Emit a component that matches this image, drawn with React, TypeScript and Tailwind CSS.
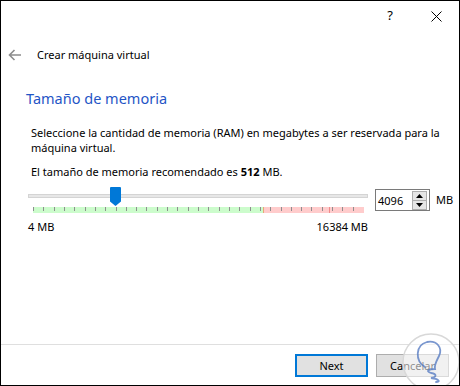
const TICKS = Array.from({ length: 32 }, (_, i) => i);

function MemorySlider() {
  return (
    <div className="w-[340px] flex flex-col">
      <div className="relative pt-[7px]">
        <div className="h-[4px] bg-[#e7e7e7] border border-[#d4d4d4]" />
        {/* thumb */}
        <svg
          className="absolute left-[82px] top-0"
          width="11"
          height="19"
          viewBox="0 0 11 19"
        >
          <path d="M1 0 H10 A1 1 0 0 1 11 1 V14.5 L5.5 19 L0 14.5 V1 A1 1 0 0 1 1 0 Z" fill="#0078d7" />
        </svg>
      </div>
      <div className="mt-[9px] ml-[5px] w-[331px] h-[6px] flex relative">
        <div className="w-[230px] h-full bg-[#ccfccc]" />
        <div className="w-px h-full bg-[#e8a878]" />
        <div className="w-[65px] h-full bg-[#ffcccc]" />
        <div className="w-px h-full bg-[#f08a8a]" />
        <div className="flex-1 h-full bg-[#ffcccc]" />
        {/* tick marks */}
        <div className="absolute left-0 top-0 w-[321px] h-[4px] flex justify-between">
          {TICKS.map((i) => (
            <div key={i} className="w-px h-full bg-[#8e8e8e]" />
          ))}
        </div>
      </div>
      <div className="mt-[6px] flex justify-between leading-[15px]">
        <span>4 MB</span>
        <span>16384 MB</span>
      </div>
    </div>
  );
}

function SpinBox() {
  return (
    <div className="mt-[2px] w-[55px] h-[22px] border border-[#7a7a7a] bg-white flex items-center">
      <span className="flex-1 pl-[2px] leading-[15px]">4096</span>
      <div className="w-[15px] h-[19px] mr-[2px] flex flex-col">
        <div className="flex-1 border border-[#adadad] bg-[#e5e5e5] flex items-center justify-center">
          <svg width="7" height="4" viewBox="0 0 7 4">
            <path d="M0 4 L3.5 0 L7 4 Z" fill="#000" />
          </svg>
        </div>
        <div className="flex-1 border border-t-0 border-[#adadad] bg-[#e5e5e5] flex items-center justify-center">
          <svg width="7" height="4" viewBox="0 0 7 4">
            <path d="M0 0 L3.5 4 L7 0 Z" fill="#000" />
          </svg>
        </div>
      </div>
    </div>
  );
}

export default function App() {
  return (
    <div className="relative w-[460px] h-[386px] bg-white border border-black flex flex-col text-[11px] text-black font-['Noto_Sans',sans-serif] overflow-hidden">
      {/* title bar */}
      <div className="h-[30px] flex justify-end">
        <div className="w-[46px] flex items-center justify-center text-[13px]">?</div>
        <div className="w-[46px] flex items-center justify-center">
          <svg width="11" height="11" viewBox="0 0 11 11">
            <path d="M0.5 0.5 L10.5 10.5 M10.5 0.5 L0.5 10.5" stroke="#000" strokeWidth="1" />
          </svg>
        </div>
      </div>

      {/* wizard header */}
      <div className="mt-[12px] h-[24px] flex items-center">
        <div className="w-[36px] flex justify-center pr-[8px]">
          <svg width="14" height="12" viewBox="0 0 14 12">
            <path d="M13 6 H1.5 M6.5 1 L1.5 6 L6.5 11" stroke="#8c8c8c" strokeWidth="1.6" fill="none" />
          </svg>
        </div>
        <span>Crear máquina virtual</span>
      </div>

      <div className="flex-1 flex flex-col">
        <h1 className="mt-[20px] pl-[25px] text-[14.5px] leading-[22px] text-[#1f55c6]">
          Tamaño de memoria
        </h1>
        <p className="mt-[16px] pl-[30px] w-[448px] leading-[15px]">
          Seleccione la cantidad de memoria (RAM) en megabytes a ser reservada para la máquina virtual.
        </p>
        <p className="mt-[9px] pl-[30px] leading-[15px]">
          El tamaño de memoria recomendado es <b>512</b> MB.
        </p>
        <div className="mt-[8px] pl-[27px] flex items-start">
          <MemorySlider />
          <div className="ml-[7px]">
            <SpinBox />
          </div>
          <span className="ml-[6px] mt-[5px] leading-[15px]">MB</span>
        </div>
      </div>

      {/* footer */}
      <div className="h-[41px] border-t border-[#dfdfdf] flex items-center justify-end gap-[8px] pr-[10px]">
        <button className="w-[73px] h-[23px] border-2 border-[#0078d7] bg-[#e1e1e1] leading-none">
          Next
        </button>
        <button className="w-[73px] h-[23px] border border-[#adadad] bg-[#e1e1e1] leading-none">
          Cancelar
        </button>
      </div>

      {/* watermark */}
      <svg
        className="absolute left-[400px] top-[330px] pointer-events-none"
        width="60"
        height="60"
        viewBox="0 0 60 60"
      >
        <circle cx="30" cy="31" r="28" fill="#ffffff" fillOpacity="0.55" stroke="#d8d8d8" strokeWidth="1.5" />
        <path
          d="M24 36 C14 30 14 14 26 11 C36 9 42 17 38 25 C35 31 33 34 34 38 C28 38 24 40 30 42 C36 43 36 46 30 47 C38 48 40 51 35 51"
          fill="none"
          stroke="#4d74bf"
          strokeOpacity="0.75"
          strokeWidth="1.8"
          strokeLinecap="round"
        />
      </svg>
    </div>
  );
}
